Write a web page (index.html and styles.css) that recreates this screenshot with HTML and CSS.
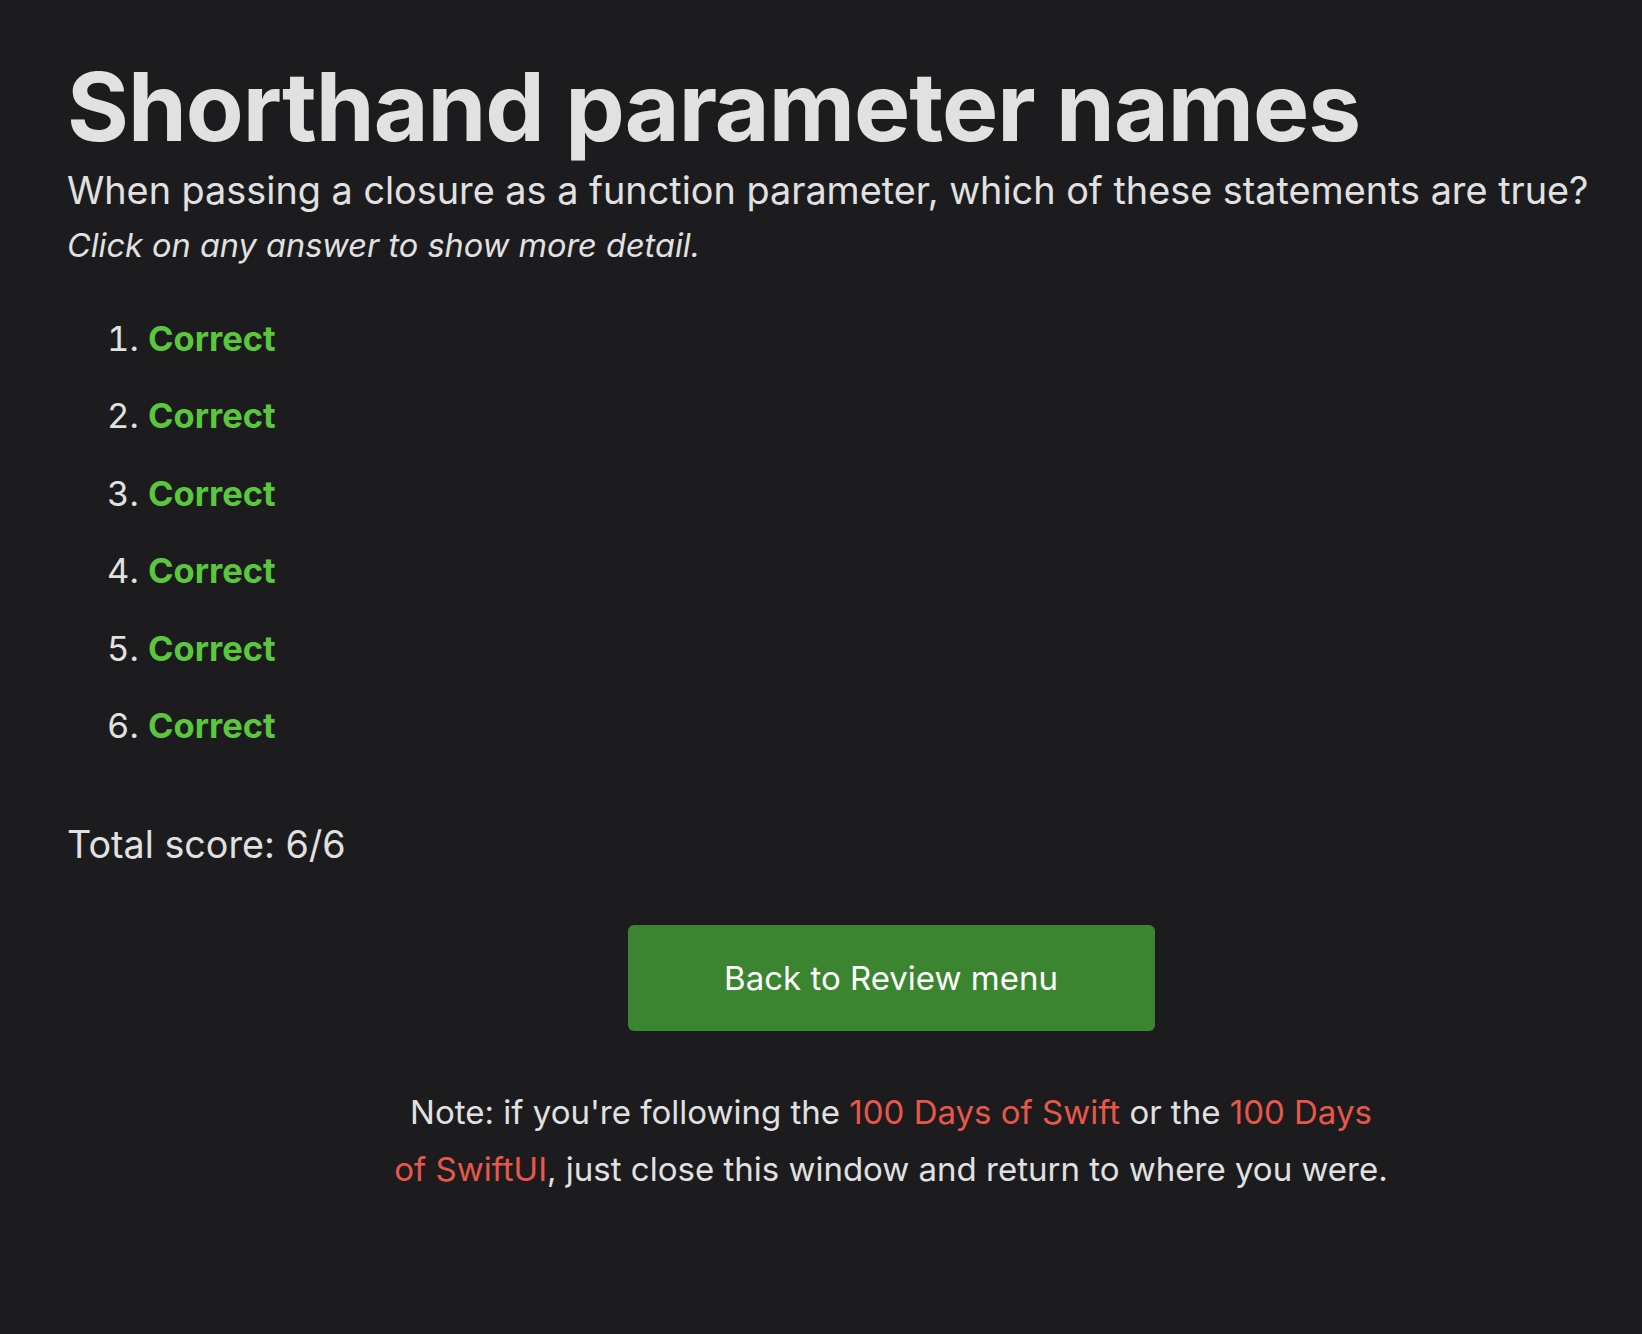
FILE: index.html
```html
<!DOCTYPE html>
<html lang="en">
<head>
<meta charset="utf-8">
<title>Shorthand parameter names</title>
<link rel="stylesheet" href="styles.css">
</head>
<body>
<main class="page">
  <h1 class="title">Shorthand parameter names</h1>
  <p class="question">When passing a closure as a function parameter, which of these statements are true?</p>
  <p class="hint">Click on any answer to show more detail.</p>
  <ol class="answers">
    <li><span class="correct">Correct</span></li>
    <li><span class="correct">Correct</span></li>
    <li><span class="correct">Correct</span></li>
    <li><span class="correct">Correct</span></li>
    <li><span class="correct">Correct</span></li>
    <li><span class="correct">Correct</span></li>
  </ol>
  <p class="score">Total score: 6/6</p>
  <div class="actions">
    <a class="button" href="#">Back to Review menu</a>
    <p class="note">Note: if you're following the <a href="#">100 Days of Swift</a> or the <a href="#">100 Days of SwiftUI</a>, just close this window and return to where you were.</p>
  </div>
</main>
</body>
</html>
```

FILE: styles.css
```css
html, body {
  margin: 0;
  padding: 0;
  background: #1c1c1e;
  overflow-x: hidden;
}
body {
  font-family: Inter, "Noto Sans", sans-serif;
  color: #e1e1e1;
}
.page {
  width: 1648px;
  padding: 0 0 0 67px;
  box-sizing: content-box;
}
.title {
  margin: 0;
  padding-top: 52px;
  font-size: 94.5px;
  font-weight: 700;
  line-height: 110px;
  letter-spacing: -1px;
}
.question {
  margin: 0;
  font-size: 37.8px;
  line-height: 56px;
}
.hint {
  margin: 0;
  font-size: 32.5px;
  font-style: italic;
  line-height: 56px;
}
.answers {
  margin: 44.5px 0 0 0;
  padding-left: 81px;
  font-size: 34.5px;
}
.answers li {
  line-height: 40px;
  margin-bottom: 37.5px;
}
.answers li:last-child {
  margin-bottom: 0;
}
.correct {
  color: #5ac73c;
  font-weight: 700;
}
.score {
  margin: 75.5px 0 0 0;
  font-size: 37.7px;
  line-height: 44px;
}
.actions {
  display: flex;
  flex-direction: column;
  align-items: center;
  margin-left: -67px;
  width: 1648px;
  padding-left: 134px;
  box-sizing: border-box;
}
.button {
  margin-top: 59px;
  width: 527px;
  height: 106px;
  display: flex;
  align-items: center;
  justify-content: center;
  background: #3b8530;
  color: #ffffff;
  border-radius: 6px;
  text-decoration: none;
  font-size: 33px;
}
.note {
  margin: 53.5px 0 0 0;
  width: 1000px;
  text-align: center;
  font-size: 33px;
  line-height: 57px;
}
.note a {
  color: #e8574a;
  text-decoration: none;
}
```
